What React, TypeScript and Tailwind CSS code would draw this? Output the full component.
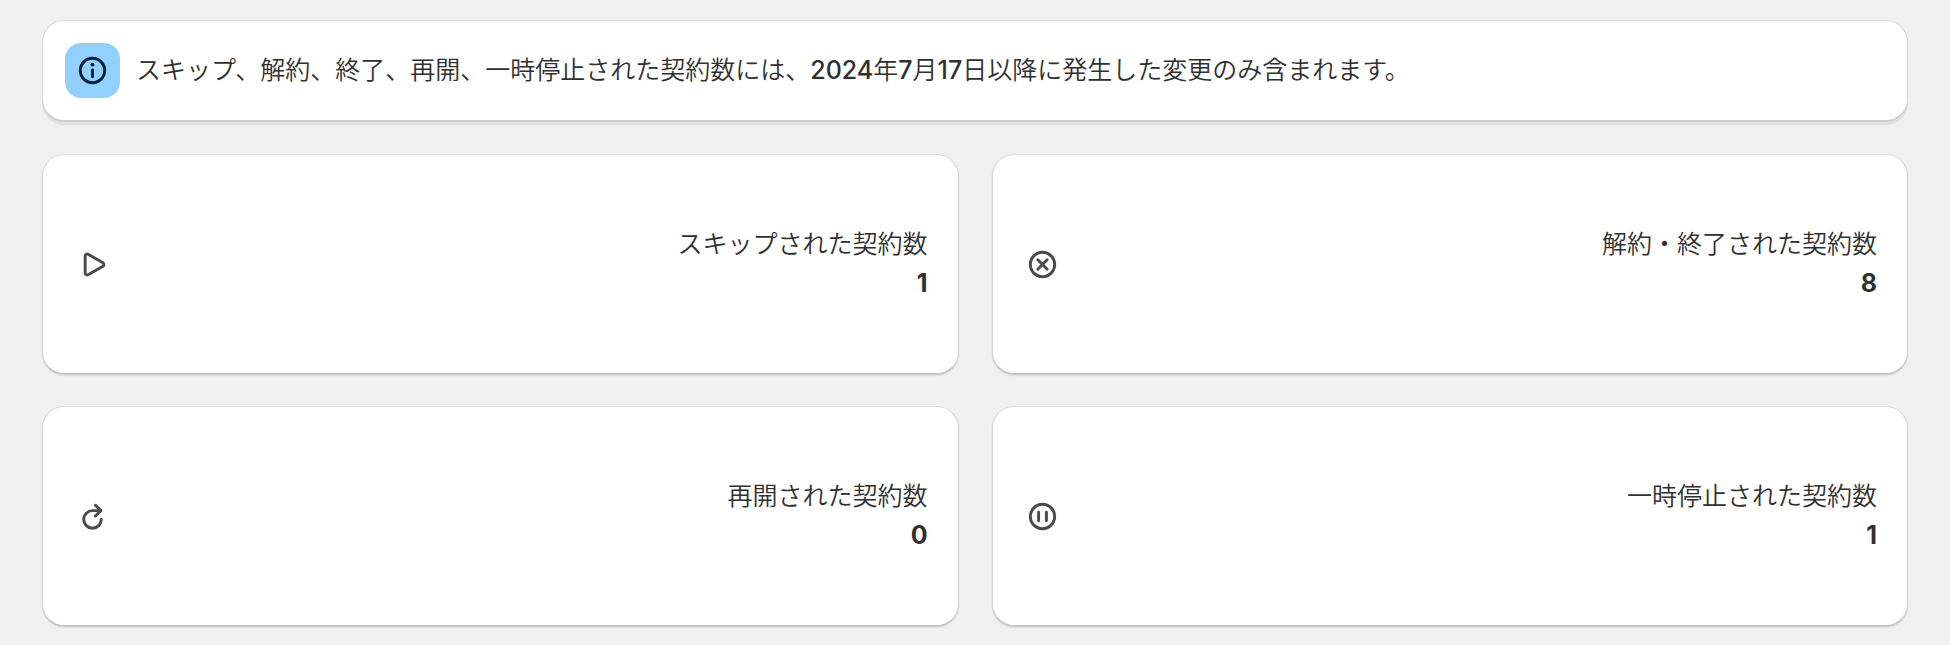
import type { ReactNode } from 'react';

function Icon({ children }: { children: ReactNode }) {
  return (
    <svg
      viewBox="0 0 20 20"
      className="size-[39px] shrink-0"
      fill="none"
      stroke="currentColor"
      strokeWidth="1.5"
      strokeLinecap="round"
      strokeLinejoin="round"
      aria-hidden="true"
    >
      {children}
    </svg>
  );
}

const stats = [
  {
    label: 'スキップされた契約数',
    value: 1,
    icon: (
      <path d="M6.25 5.62v8.76c0 .77.83 1.25 1.5.87l7.6-4.38c.67-.38.67-1.35 0-1.74l-7.6-4.38c-.67-.38-1.5.1-1.5.87Z" />
    ),
  },
  {
    label: '解約・終了された契約数',
    value: 8,
    icon: (
      <>
        <circle cx="10" cy="10" r="6.25" />
        <path d="m7.6 7.6 4.8 4.8M12.4 7.6l-4.8 4.8" />
      </>
    ),
  },
  {
    label: '再開された契約数',
    value: 0,
    icon: (
      <>
        <path d="M14.5 11.5a4.5 4.5 0 1 1-4.5-4.5h4" />
        <path d="M11.5 4.25 14.25 7l-2.75 2.75" />
      </>
    ),
  },
  {
    label: '一時停止された契約数',
    value: 1,
    icon: (
      <>
        <circle cx="10" cy="10" r="6.25" />
        <path d="M8 7.85v4.3M12 7.85v4.3" />
      </>
    ),
  },
];

export default function App() {
  return (
    <main className="min-h-screen bg-[#f0f0f0] px-[42px] pt-5 font-[Inter,'Noto_Sans_CJK_JP',sans-serif] text-[25px] leading-[39px] text-[#303030]">
      <div className="mb-[33px] flex items-center gap-4 rounded-[22px] border border-[#d6d6d6] border-t-[#dedede] border-b-[#cccccc] bg-white px-[22px] py-[22px] shadow-[0_1px_0_#cfcfcf,0_4px_1px_rgba(0,0,0,0.07)]">
        <div className="flex size-[55px] shrink-0 items-center justify-center rounded-2xl bg-[#91d0ff] text-[#00213a]">
          <Icon>
            <circle cx="10" cy="10" r="6.25" />
            <path d="M10 9.75v3.5" />
            <circle cx="10" cy="7" r="1" fill="currentColor" stroke="none" />
          </Icon>
        </div>
        <p className="font-[350]">
          スキップ、解約、終了、再開、一時停止された契約数には、
          <span className="font-medium">2024</span>年<span className="font-medium">7</span>月
          <span className="font-medium">17</span>日以降に発生した変更のみ含まれます。
        </p>
      </div>

      <div className="grid grid-cols-2 gap-x-[33px] gap-y-8">
        {stats.map((stat) => (
          <section
            key={stat.label}
            className="flex items-center justify-between rounded-[22px] border border-[#d6d6d6] border-t-[#dedede] border-b-[#c4c4c4] bg-white px-[30px] py-[70px] shadow-[0_1px_1px_rgba(0,0,0,0.14),0_2px_2px_rgba(0,0,0,0.05)]"
          >
            <span className="text-[#4a4a4a]">
              <Icon>{stat.icon}</Icon>
            </span>
            <div className="text-right">
              <h2 className="font-[350]">{stat.label}</h2>
              <p className="font-bold">{stat.value}</p>
            </div>
          </section>
        ))}
      </div>
    </main>
  );
}
